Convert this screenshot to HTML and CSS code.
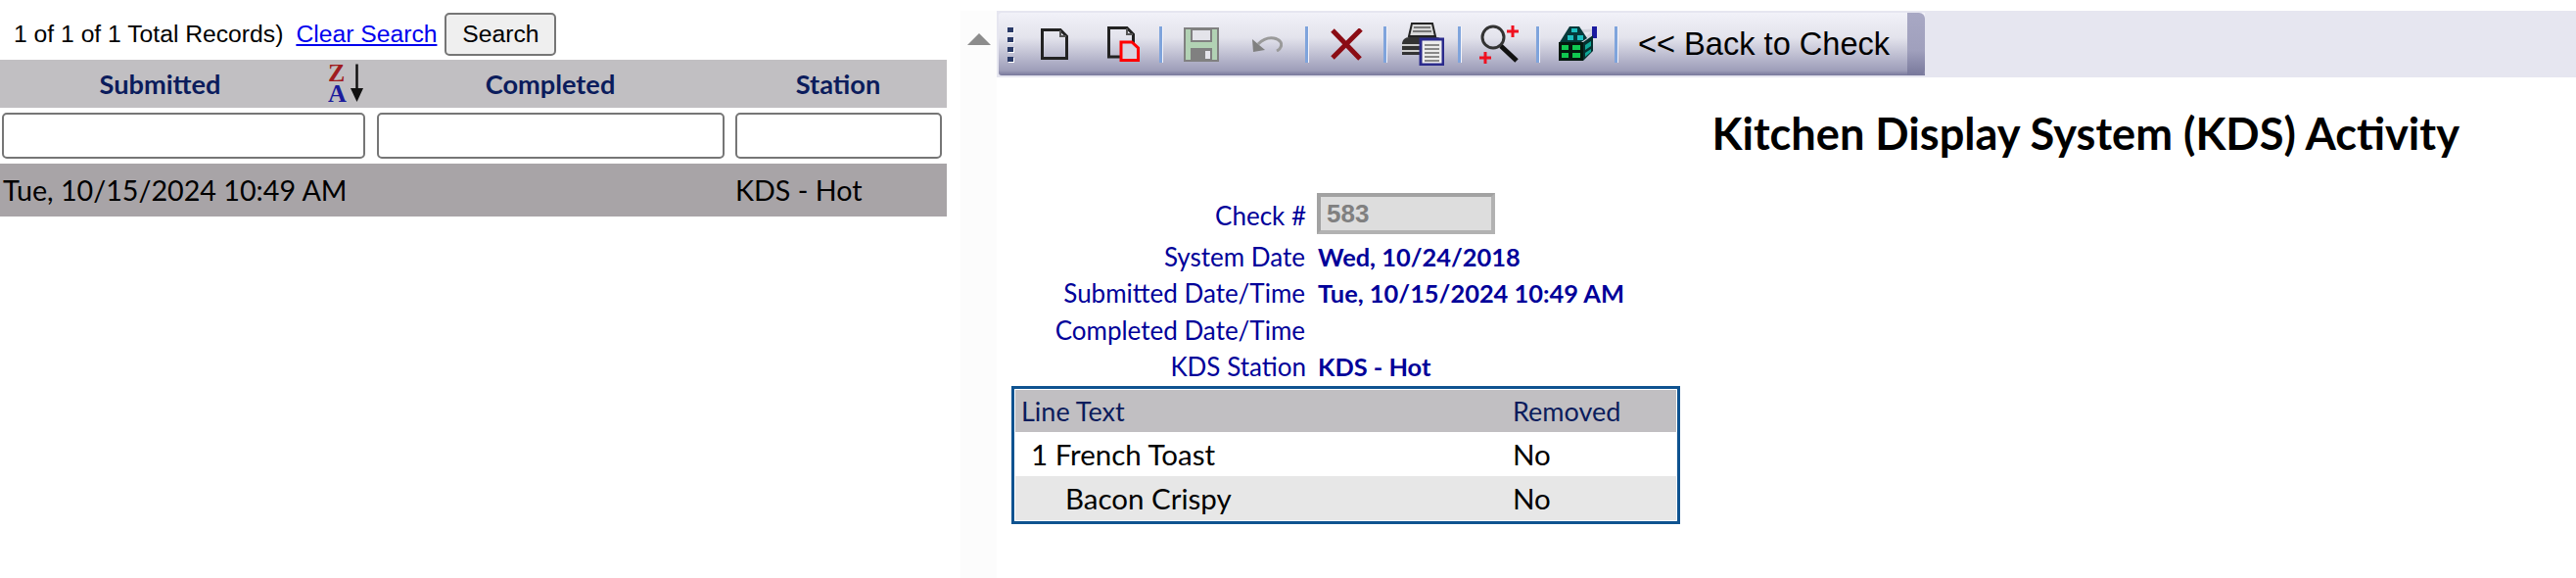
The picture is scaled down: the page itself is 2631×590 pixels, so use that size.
FILE: index.html
```html
<!DOCTYPE html>
<html lang="en">
<head>
    <meta charset="UTF-8">
    <meta name="viewport" content="width=device-width, initial-scale=1.0">
    <title>Kitchen Display System (KDS) Activity</title>
    <link rel="stylesheet" href="styles.css">
</head>
<body>
    <div class="page">
        <div class="list-panel">
            <div class="pager">
                <span>1 of 1 of 1 Total Records)</span>
                <a href="#" class="clear-link">Clear Search</a>
                <button class="search-btn">Search</button>
            </div>
            <div class="list-row list-head">
                <div class="head-cell head-sorted">
                    <span class="head-label">Submitted</span>
                    <svg class="sort-icon" width="37" height="54" viewBox="0 -3 37 54">
                        <text x="0" y="20.500" class="sort-z">Z</text>
                        <text x="0" y="41.500" class="sort-a">A</text>
                        <path d="M29.500 3.500V32" stroke="#111" stroke-width="2.500" fill="none"/>
                        <path d="M23 28H36L29.500 42Z" fill="#111"/>
                    </svg>
                </div>
                <div class="head-cell">Completed</div>
                <div class="head-cell">Station</div>
            </div>
            <div class="list-row list-filter">
                <input type="text" class="filter-input">
                <input type="text" class="filter-input">
                <input type="text" class="filter-input">
            </div>
            <div class="list-row list-item">
                <div>Tue, 10/15/2024 10:49 AM</div>
                <div></div>
                <div>KDS - Hot</div>
            </div>
        </div>

        <div class="splitter">
            <div class="collapse-arrow"></div>
        </div>

        <div class="detail-panel">
            <div class="toolbar-strip">
                <div class="toolbar">
                    <div class="grip"><i></i><i></i><i></i><i></i></div>

                    <div class="tool tool-new">
                        <svg width="28" height="32" viewBox="0 0 28 32"><path d="M1.500 1.500H20L26.500 8V30.500H1.500Z" fill="none" stroke="#222" stroke-width="3"/><path d="M20 2V8H26" fill="none" stroke="#555" stroke-width="2"/></svg>
                    </div>
                    <div class="tool tool-copy">
                        <svg width="33" height="36" viewBox="0 0 33 36"><path d="M1.500 1.500H20L26.500 8V31H1.500Z" fill="none" stroke="#222" stroke-width="3"/><path d="M20 2V8H26" fill="none" stroke="#555" stroke-width="2"/><path d="M14 16H25L31.500 22V34.500H14Z" fill="#d6d5e2" stroke="#f00" stroke-width="3"/></svg>
                    </div>
                    <div class="sep"></div>

                    <div class="tool tool-save">
                        <svg width="36" height="35" viewBox="0 0 36 35"><path d="M1 1H35V34H1Z" fill="#b2d2b4" stroke="#808080" stroke-width="2"/><path d="M8 2H28V14H8Z" fill="#e4e4ea" stroke="#808080" stroke-width="2"/><path d="M7 21H29V34H7Z" fill="#808080"/><path d="M22 24H27V32H22Z" fill="#e4e4ea"/></svg>
                    </div>
                    <div class="tool tool-undo">
                        <svg width="31" height="16" viewBox="0 0 31 16"><path d="M6 8C10 4 16 1 22 2C28 3 31 7 29 11C28.500 13 27 14 25 15" fill="none" stroke="#9a9a9a" stroke-width="3"/><path d="M0 3L1 16L13 14Z" fill="#808080"/></svg>
                    </div>
                    <div class="sep"></div>

                    <div class="tool">
                        <svg width="34" height="33" viewBox="0 0 34 33"><path d="M3 2L31 31" stroke="#8b0c14" stroke-width="5" fill="none"/><path d="M32 1L3 30" stroke="#8b0c14" stroke-width="5" fill="none"/></svg>
                    </div>
                    <div class="sep"></div>

                    <div class="tool tool-print">
                        <svg width="44" height="44" viewBox="0 0 44 44"><path d="M11 1H32L35 14H8Z" fill="#d8d8d8" stroke="#222" stroke-width="2"/><path d="M13 5H30M12 9H31" stroke="#777" stroke-width="2"/><path d="M1 22C1 18 4 15 8 15H36C40 15 43 18 43 22V33H1Z" fill="#333"/><path d="M1 23H43M1 29H43" stroke="#ccc" stroke-width="2"/><path d="M20 17H43V43H20Z" fill="#ececec" stroke="#2a2a8c" stroke-width="3"/><path d="M24 23H39M24 27H39M24 31H39M24 35H39M24 39H39" stroke="#888" stroke-width="2"/></svg>
                    </div>
                    <div class="sep"></div>

                    <div class="tool">
                        <svg width="41" height="40" viewBox="0 0 41 40"><circle cx="15" cy="13" r="11" fill="none" stroke="#333" stroke-width="3"/><path d="M23 22L39 37" stroke="#111" stroke-width="5" fill="none"/><path d="M29 7H41M35 1V13" stroke="#f01020" stroke-width="3" fill="none"/><path d="M1 34H13M7 28V40" stroke="#f01020" stroke-width="3" fill="none"/></svg>
                    </div>
                    <div class="sep"></div>

                    <div class="tool">
                        <svg width="40" height="36" viewBox="0 0 40 36"><path d="M20 5L36 4M27 14L36 6" stroke="#d4d4de" stroke-width="3"/><path d="M35 0H40V12H35Z" fill="#1a1aa0"/><path d="M12 0H22L30 12L24 16H2Z" fill="#06383a"/><path d="M14 2H20V6H14ZM10 9H16V14H10ZM20 9H26V14H20Z" fill="#1cc0c0"/><path d="M1 16H26V35H1Z" fill="#04180f"/><path d="M26 16L36 9V25L26 35Z" fill="#07302f"/><path d="M4 19H11V24H4ZM15 19H23V24H15ZM4 27H11V32H4ZM15 27H23V32H15Z" fill="#10c850"/><path d="M28 19L34 15V20L28 24ZM28 27L34 23V26L28 31Z" fill="#10a898"/></svg>
                    </div>
                    <div class="sep"></div>

                    <div class="back-label">&lt;&lt; Back to Check</div>
                    <div class="toolbar-cap"></div>
                </div>
            </div>

            <h1 class="page-title">Kitchen Display System (KDS) Activity</h1>

            <div class="fields">
                <div class="field field-check">
                    <label>Check #</label>
                    <input type="text" class="check-input" value="583" disabled>
                </div>
                <div class="field"><label>System Date</label><span class="field-value">Wed, 10/24/2018</span></div>
                <div class="field"><label>Submitted Date/Time</label><span class="field-value">Tue, 10/15/2024 10:49 AM</span></div>
                <div class="field"><label>Completed Date/Time</label><span class="field-value"></span></div>
                <div class="field field-station"><label>KDS Station</label><span class="field-value">KDS - Hot</span></div>
            </div>

            <div class="lines">
                <div class="line line-head"><div class="line-text">Line Text</div><div>Removed</div></div>
                <div class="line"><div class="line-text line-main">1 French Toast</div><div>No</div></div>
                <div class="line line-alt"><div class="line-text line-mod">Bacon Crispy</div><div>No</div></div>
            </div>
        </div>
    </div>
</body>
</html>
```

FILE: styles.css
```css
* {
    box-sizing: border-box;
}
html, body {
    margin: 0;
    height: 100%;
    overflow: hidden;
    background-color: #ffffff;
}
body {
    font-family: "Lato", "Liberation Sans", sans-serif;
}
.page {
    display: flex;
    height: 590px;
}

/* left list */
.list-panel {
    width: 981px;
    flex-shrink: 0;
}
.pager {
    display: flex;
    align-items: center;
    width: 967px;
    height: 61px;
    padding: 9px 0 0 14px;
    font-family: "Liberation Sans", sans-serif;
    font-size: 24.700px;
    color: #000000;
}
.clear-link {
    margin-left: 13px;
    color: #0000ee;
}
.search-btn {
    width: 114px;
    height: 44px;
    margin-left: 8px;
    padding: 0;
    border: 2px solid #767676;
    border-radius: 5px;
    background-color: #efefef;
    font-family: "Liberation Sans", sans-serif;
    font-size: 24.700px;
    color: #000000;
}
.list-row {
    display: grid;
    grid-template-columns: 379px 366px 222px;
    width: 967px;
}
.list-head {
    height: 49px;
    grid-template-rows: 49px;
    background-color: #c1bfc2;
    align-items: center;
    font-size: 27.200px;
    font-weight: bold;
    color: #0b1c5c;
    text-align: center;
}
.head-sorted {
    display: flex;
    align-items: center;
    height: 49px;
}
.head-label {
    flex: 1;
    padding-right: 8px;
}
.sort-icon {
    margin-right: 7px;
}
.sort-z, .sort-a {
    font-family: "Liberation Serif", serif;
    font-size: 26px;
    font-weight: bold;
}
.sort-z {
    fill: #a01c20;
}
.sort-a {
    fill: #1c1c9c;
}
.list-filter {
    height: 57px;
    padding-top: 5px;
}
.filter-input {
    height: 47px;
    width: 100%;
    border: 2px solid #767676;
    border-radius: 5px;
    background-color: #ffffff;
}
.filter-input:nth-child(1) {
    width: 371px;
    margin-left: 2px;
}
.filter-input:nth-child(2) {
    width: 355px;
    margin-left: 6px;
}
.filter-input:nth-child(3) {
    width: 211px;
    margin-left: 6px;
}
.list-item {
    height: 54px;
    align-items: center;
    background-color: #a8a4a7;
    font-size: 28.700px;
    color: #000000;
}
.list-item div:first-child {
    padding-left: 3px;
}
.list-item div:last-child {
    padding-left: 6px;
}

/* collapse bar */
.splitter {
    width: 37px;
    flex-shrink: 0;
    margin-top: 11px;
    padding: 23px 0 0 7px;
    background-color: #fcfcfc;
}
.collapse-arrow {
    width: 0;
    height: 0;
    border-left: 12px solid transparent;
    border-right: 12px solid transparent;
    border-bottom: 12px solid #8c8c8c;
}

/* right detail */
.detail-panel {
    flex: 1;
    margin-top: 11px;
}
.toolbar-strip {
    height: 68px;
    padding: 2px;
    background-color: #e6e6f0;
}
.toolbar {
    display: flex;
    align-items: center;
    width: 946px;
    height: 64px;
    padding-left: 8px;
    border-radius: 3px 0 0 3px;
    background: linear-gradient(#f1f1f8 0%, #e3e3ec 40%, #b4b4ca 75%, #9e9eb9 92%, #78789b 100%);
}
.grip {
    display: flex;
    flex-direction: column;
    gap: 5px;
    width: 10px;
}
.grip i {
    display: block;
    width: 6px;
    height: 5px;
    margin-left: 1px;
    background-color: #2a3a68;
    box-shadow: 1px 1px 0 #ffffff;
}
.tool {
    display: flex;
    justify-content: center;
    align-items: center;
    width: 77px;
}
.tool-new {
    width: 78px;
}
.tool-copy {
    width: 63px;
    margin-right: 5px;
}
.tool-save {
    width: 80px;
}
.tool-undo {
    width: 55px;
    margin-right: 11px;
}
.tool-print {
    width: 73px;
}
.tool svg {
    filter: blur(0.6px);
}
.sep {
    width: 3px;
    height: 37px;
    background-color: #7fa4dc;
    box-shadow: 1px 0 0 #f4f4fa;
    flex-shrink: 0;
}
.back-label {
    margin-left: 21px;
    font-family: "Liberation Sans", sans-serif;
    font-size: 32.600px;
    color: #000000;
}
.toolbar-cap {
    align-self: stretch;
    width: 18px;
    margin-left: auto;
    border-radius: 0 6px 6px 0;
    background: linear-gradient(#a8a8c4 0%, #a0a0bd 60%, #78789b 100%);
}
.page-title {
    margin: 28px 119px 0 0;
    font-size: 45.200px;
    line-height: 58px;
    font-weight: bold;
    color: #000000;
    text-align: right;
}
.fields {
    margin-top: 32px;
}
.field {
    display: flex;
    align-items: center;
    height: 37.500px;
    font-size: 26px;
    color: #000099;
}
.field-check {
    align-items: flex-start;
    height: 46px;
}
.field-check label {
    padding-top: 7px;
}
.field label {
    width: 315px;
    text-align: right;
}
.field-check label, .field-station label {
    width: 316px;
}
.field-value {
    margin-left: 13px;
    font-size: 25.400px;
    font-weight: bold;
}
.field-station .field-value {
    margin-left: 12px;
}
.check-input {
    width: 182px;
    height: 42px;
    margin-left: 11px;
    padding: 0 0 0 6px;
    border: 4px solid #b2b2b2;
    border-top-color: #a2a2a2;
    border-left-color: #a2a2a2;
    background-color: #dddddd;
    font-family: "Liberation Sans", sans-serif;
    font-size: 26px;
    font-weight: bold;
    color: #808080;
}
.lines {
    width: 683px;
    margin: 1px 0 0 15px;
    padding: 1px;
    border: 3px solid #0f5390;
}
.line {
    display: grid;
    grid-template-columns: 508px 1fr;
    align-items: center;
    height: 45px;
    font-size: 29.500px;
    color: #000000;
}
.line-head {
    height: 43px;
    background-color: #c1bfc2;
    font-size: 27px;
    color: #0b1c5c;
}
.line-alt {
    background-color: #e7e7e7;
}
.line-text {
    padding-left: 6px;
}
.line-main {
    padding-left: 16px;
}
.line-mod {
    padding-left: 51px;
}
```
